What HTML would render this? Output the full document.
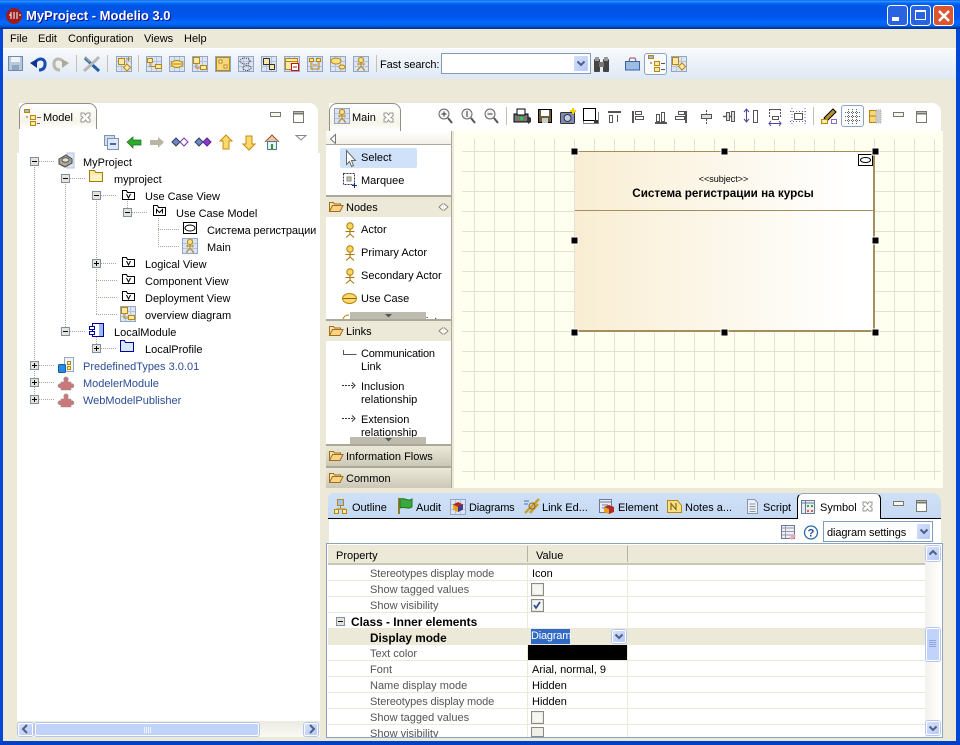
<!DOCTYPE html>
<html><head><meta charset="utf-8"><title>MyProject - Modelio 3.0</title>
<style>
html,body{margin:0;padding:0;width:960px;height:745px;overflow:hidden;background:#ece9d8}
body{position:relative;font:11px/14px "Liberation Sans","Noto Sans CJK SC",sans-serif;color:#000}
div,span{position:absolute;box-sizing:border-box}
.t{white-space:nowrap;height:14px;margin-top:1px}
.g{color:#555}.b{color:#2a4c96}
.sb{background:linear-gradient(135deg,#d4e0fd,#b7c9f8);border:1px solid #fff;border-radius:2px;box-shadow:0 0 0 1px #b4c6ea}
.hdr{left:326px;width:125px;height:20px;background:#ece9d8}
svg{position:absolute;left:0;top:0;z-index:5}
</style></head><body>

<!-- title bar -->
<div style="left:0;top:0;width:960px;height:29px;background:linear-gradient(to bottom,#0058ee 0%,#3593ff 4%,#288eff 6%,#127dff 8%,#036ffc 10%,#0262ee 14%,#0057e5 20%,#0054e3 24%,#0055eb 56%,#005bf5 66%,#026afe 76%,#0062ef 86%,#0052d6 92%,#0040ab 94%,#003092 100%)"></div>
<div class="t" style="left:26px;top:8px;height:16px;margin:0;font:bold 13px/16px 'Liberation Sans',sans-serif;color:#fff;text-shadow:1px 1px 0 #0f1089">MyProject - Modelio 3.0</div>
<!-- window frame -->
<div style="left:0;top:29px;width:3px;height:716px;background:#0047d5"></div>
<div style="left:956px;top:29px;width:4px;height:716px;background:#0047d5"></div>
<div style="left:0;top:741px;width:960px;height:4px;background:#0040c4"></div>

<!-- menu -->
<div class="t" style="left:10px;top:31px">File</div>
<div class="t" style="left:38px;top:31px">Edit</div>
<div class="t" style="left:68px;top:31px">Configuration</div>
<div class="t" style="left:144px;top:31px">Views</div>
<div class="t" style="left:184px;top:31px">Help</div>

<!-- toolbar -->
<div style="left:3px;top:48px;width:953px;height:31px;background:linear-gradient(#f7f9fc,#dfe9f4);border-top:1px solid #fff"></div>
<div class="t" style="left:380px;top:57px;letter-spacing:-.1px">Fast search:</div>
<div style="left:441px;top:53px;width:150px;height:21px;background:#fff;border:1px solid #7f9db9"></div>
<div class="sb" style="left:573px;top:55px;width:16px;height:17px;box-shadow:none"></div>
<div style="left:644px;top:53px;width:23px;height:22px;background:#f8fafd;border:1px solid #8ca5c4;border-radius:3px"></div>

<!-- Model panel -->
<div style="left:19px;top:103px;width:299px;height:50px;background:#fff;border-radius:0 9px 0 0"></div>
<div style="left:19px;top:103px;width:78px;height:26px;background:linear-gradient(#fff,#f6f4ea 70%,#fff);border:1px solid #8f8f84;border-bottom:0;border-radius:8px 8px 0 0"></div>
<div class="t" style="left:43px;top:110px">Model</div>
<div style="left:17px;top:153px;width:303px;height:568px;background:#fff"></div>
<div style="left:17px;top:721px;width:303px;height:16px;background:linear-gradient(#ecebe2,#faf9f5)"></div>
<div class="sb" style="left:18px;top:723px;width:15px;height:13px"></div>
<div class="sb" style="left:35px;top:723px;width:224px;height:13px;background:#c1d2fb"></div>
<div class="sb" style="left:304px;top:723px;width:14px;height:13px"></div>

<div class="t" style="left:83px;top:155px">MyProject</div>
<div class="t" style="left:114px;top:172px">myproject</div>
<div class="t" style="left:145px;top:189px">Use Case View</div>
<div class="t" style="left:176px;top:206px">Use Case Model</div>
<div class="t" style="left:207px;top:223px;letter-spacing:-.1px">Система регистрации</div>
<div class="t" style="left:207px;top:240px">Main</div>
<div class="t" style="left:145px;top:257px">Logical View</div>
<div class="t" style="left:145px;top:274px">Component View</div>
<div class="t" style="left:145px;top:291px">Deployment View</div>
<div class="t" style="left:145px;top:308px">overview diagram</div>
<div class="t" style="left:114px;top:325px">LocalModule</div>
<div class="t" style="left:145px;top:342px">LocalProfile</div>
<div class="t b" style="left:83px;top:359px">PredefinedTypes 3.0.01</div>
<div class="t b" style="left:83px;top:376px">ModelerModule</div>
<div class="t b" style="left:83px;top:393px">WebModelPublisher</div>

<!-- Main panel -->
<div style="left:329px;top:103px;width:612px;height:28px;background:#fff;border-radius:0 9px 0 0"></div>
<div style="left:329px;top:103px;width:72px;height:28px;background:linear-gradient(#fff,#f6f4ea 70%,#fff);border:1px solid #8f8f84;border-bottom:0;border-radius:8px 8px 0 0"></div>
<div class="t" style="left:352px;top:110px">Main</div>
<div style="left:841px;top:105px;width:23px;height:22px;background:#fbfcfe;border:1px solid #8ca5c4;border-radius:3px"></div>
<div style="left:454px;top:131px;width:489px;height:357px;background:#fffff0"></div>

<!-- palette -->
<div style="left:326px;top:131px;width:125px;height:357px;background:#fff"></div>
<div style="left:451px;top:131px;width:3px;height:357px;background:#ece9d8;border-left:1px solid #aca899"></div>
<div style="left:326px;top:131px;width:125px;height:14px;background:linear-gradient(#fff,#f2f0e6);border-bottom:1px solid #aca899"></div>
<div style="left:340px;top:148px;width:77px;height:20px;background:#cfe2fa;border-radius:2px"></div>
<div class="t" style="left:361px;top:150px">Select</div>
<div class="t" style="left:361px;top:173px">Marquee</div>
<div style="left:326px;top:195px;width:125px;height:2px;background:#aca899"></div>
<div class="hdr" style="top:197px"></div><div class="t" style="left:346px;top:200px">Nodes</div>
<div class="t" style="left:361px;top:222px">Actor</div>
<div class="t" style="left:361px;top:245px">Primary Actor</div>
<div class="t" style="left:361px;top:268px">Secondary Actor</div>
<div class="t" style="left:361px;top:291px">Use Case</div>
<div style="left:326px;top:312px;width:125px;height:7px;overflow:hidden"><div class="t" style="left:35px;top:2px">Extension Point</div></div>
<div style="left:350px;top:312px;width:76px;height:7px;background:#bdbaae"></div>
<div style="left:326px;top:319px;width:125px;height:2px;background:#aca899"></div>
<div class="hdr" style="top:321px"></div><div class="t" style="left:346px;top:324px">Links</div>
<div class="t" style="left:361px;top:346px;letter-spacing:-.2px">Communication</div>
<div class="t" style="left:361px;top:359px">Link</div>
<div class="t" style="left:361px;top:379px">Inclusion</div>
<div class="t" style="left:361px;top:392px">relationship</div>
<div class="t" style="left:361px;top:412px">Extension</div>
<div class="t" style="left:361px;top:425px">relationship</div>
<div style="left:350px;top:437px;width:76px;height:7px;background:#bdbaae"></div>
<div style="left:326px;top:444px;width:125px;height:2px;background:#aca899"></div>
<div class="hdr" style="top:446px;background:linear-gradient(#ece9d8,#cbc8b8)"></div><div class="t" style="left:346px;top:449px">Information Flows</div>
<div style="left:326px;top:466px;width:125px;height:2px;background:#aca899"></div>
<div class="hdr" style="top:468px;background:linear-gradient(#ece9d8,#cbc8b8)"></div><div class="t" style="left:346px;top:471px">Common</div>

<!-- subject -->
<div style="left:574px;top:151px;width:301px;height:181px;background:linear-gradient(90deg,#f9eed3,#fff 92%);border:1px solid #a58d5c;border-width:1px 2px 2px 1px"></div>
<div style="left:575px;top:210px;width:299px;height:1px;background:#a58d5c"></div>
<div class="t" style="left:574px;top:171px;width:299px;text-align:center;font-size:9px">&lt;&lt;subject&gt;&gt;</div>
<div class="t" style="left:574px;top:186px;width:298px;text-align:center;font-weight:bold;font-size:11.7px">Система регистрации на курсы</div>

<!-- bottom panel -->
<div style="left:328px;top:493px;width:613px;height:26px;background:linear-gradient(#cfe0f6,#c6daf4);border-bottom:1px solid #000;border-radius:6px 9px 0 0"></div>
<div style="left:797px;top:493px;width:84px;height:26px;background:#fff;border:1px solid #000;border-top:1px solid #9aa6b8;border-bottom:0;border-radius:6px 6px 0 0"></div>
<div style="left:329px;top:519px;width:612px;height:25px;background:#fff"></div>
<div class="t" style="left:352px;top:500px">Outline</div>
<div class="t" style="left:416px;top:500px">Audit</div>
<div class="t" style="left:469px;top:500px;letter-spacing:-.2px">Diagrams</div>
<div class="t" style="left:542px;top:500px">Link Ed...</div>
<div class="t" style="left:618px;top:500px">Element</div>
<div class="t" style="left:685px;top:500px">Notes a...</div>
<div class="t" style="left:763px;top:500px">Script</div>
<div class="t" style="left:820px;top:500px">Symbol</div>
<div style="left:823px;top:521px;width:110px;height:21px;background:#fff;border:1px solid #7f9db9"></div>
<div class="t" style="left:827px;top:525px;letter-spacing:-.1px">diagram settings</div>
<div class="sb" style="left:916px;top:523px;width:15px;height:17px;box-shadow:none"></div>

<!-- table -->
<div style="left:326px;top:543px;width:617px;height:195px;background:#fff;border:1px solid #8ca3c0;overflow:hidden">
<div style="left:-327px;top:-544px;width:960px;height:745px">
<div style="left:328px;top:545px;width:597px;height:18px;background:#ece9d8"></div>
<div style="left:328px;top:563px;width:597px;height:2px;background:#c9c6b6"></div>
<div style="left:527px;top:546px;width:1px;height:16px;background:#b4b2a4"></div>
<div style="left:627px;top:546px;width:1px;height:16px;background:#b4b2a4"></div>
<div class="t" style="left:336px;top:548px">Property</div>
<div class="t" style="left:536px;top:548px">Value</div>
<div style="left:328px;top:629px;width:597px;height:16px;background:#ece9d8"></div>
<div style="left:328px;top:580px;width:597px;height:1px;background:#ece9d8"></div>
<div style="left:328px;top:596px;width:597px;height:1px;background:#ece9d8"></div>
<div style="left:328px;top:612px;width:597px;height:1px;background:#ece9d8"></div>
<div style="left:328px;top:628px;width:597px;height:1px;background:#ece9d8"></div>
<div style="left:328px;top:660px;width:597px;height:1px;background:#ece9d8"></div>
<div style="left:328px;top:676px;width:597px;height:1px;background:#ece9d8"></div>
<div style="left:328px;top:692px;width:597px;height:1px;background:#ece9d8"></div>
<div style="left:328px;top:708px;width:597px;height:1px;background:#ece9d8"></div>
<div style="left:328px;top:724px;width:597px;height:1px;background:#ece9d8"></div>
<div style="left:527px;top:565px;width:1px;height:175px;background:#ece9d8"></div>
<div style="left:627px;top:565px;width:1px;height:175px;background:#ece9d8"></div>
<div style="left:528px;top:645px;width:99px;height:15px;background:#000"></div>
<div style="left:531px;top:629px;width:39px;height:15px;background:#316ac5"></div>
<div class="t" style="left:531px;top:628px;color:#fff;letter-spacing:-.2px">Diagram</div>
<div class="sb" style="left:612px;top:630px;width:14px;height:13px"></div>
<div class="t g" style="left:370px;top:566px;letter-spacing:-.1px">Stereotypes display mode</div><div class="t" style="left:532px;top:566px">Icon</div>
<div class="t g" style="left:370px;top:582px">Show tagged values</div>
<div class="t g" style="left:370px;top:598px">Show visibility</div>
<div class="t" style="left:351px;top:614px;font-weight:bold;font-size:11.9px">Class - Inner elements</div>
<div class="t" style="left:370px;top:630px;font-weight:bold;font-size:11.8px">Display mode</div>
<div class="t g" style="left:370px;top:646px">Text color</div>
<div class="t g" style="left:370px;top:662px">Font</div><div class="t" style="left:532px;top:662px">Arial, normal, 9</div>
<div class="t g" style="left:370px;top:678px">Name display mode</div><div class="t" style="left:532px;top:678px">Hidden</div>
<div class="t g" style="left:370px;top:694px;letter-spacing:-.1px">Stereotypes display mode</div><div class="t" style="left:532px;top:694px">Hidden</div>
<div class="t g" style="left:370px;top:710px">Show tagged values</div>
<div class="t g" style="left:370px;top:726px">Show visibility</div>
<div style="left:925px;top:545px;width:16px;height:192px;background:linear-gradient(90deg,#f3f1ec,#fff)"></div>
<div class="sb" style="left:926px;top:546px;width:14px;height:15px"></div>
<div class="sb" style="left:926px;top:628px;width:14px;height:33px;background:#c1d2fb"></div>
<div class="sb" style="left:926px;top:721px;width:14px;height:14px"></div>
</div></div>

<svg width="960" height="745" viewBox="0 0 960 745" fill="none">
<defs>
<g id="dg"><rect x=".5" y=".5" width="15" height="15" fill="#dce4f2" stroke="#93a6c6"/><path d="M5.500 1v14M10.500 1v14M1 5.500h14M1 10.500h14" stroke="#b4c2dc"/></g>
<g id="act"><circle cx="7" cy="4" r="3.200" fill="#f7d75e" stroke="#b07c08"/><path d="M7 7v5M2.500 9.500h9M7 12l-4 3.500M7 12l4 3.500" stroke="#a87808" stroke-width="1.100"/></g>
<g id="pkg"><path d="M.5 9.500v-9h4l1 2h7v7z" fill="#fff" stroke="#000"/><path d="M4.500 4l2 4 2-4" stroke="#000"/></g>
<g id="min"><rect x=".5" y=".5" width="10" height="4" fill="#f7f6f1" stroke="#77776a"/></g>
<g id="max"><rect x=".5" y=".5" width="10" height="11" fill="#fff" stroke="#77776a"/><path d="M1 2.500h9" stroke="#77776a" stroke-width="2"/></g>
<g id="x"><path d="M1 1h3l1.500 2L7 1h3v3L8 5.500 10 7v3H7L5.500 8 4 10H1V7l2-1.500L1 4z" fill="#fff" stroke="#96968c"/></g>
<g id="ofold"><path d="M.5 11.500v-9h4l1 1.500h6v2" fill="#fbe3a1" stroke="#a56b1b"/><path d="M.5 11.500l3-6h10.500l-3 6z" fill="#fad486" stroke="#a56b1b"/></g>
<g id="dbl"><path d="M5 .5l-4 3.500 4 3.500M6 .5l4 3.500-4 3.500" stroke="#8b8b80" fill="#fff"/></g>
<g id="pm"><rect x=".5" y=".5" width="8" height="8" fill="#e6e4d6" stroke="#7e8ea6"/><path d="M2 4.500h5" stroke="#000"/></g>
<g id="pp"><rect x=".5" y=".5" width="8" height="8" fill="#e6e4d6" stroke="#7e8ea6"/><path d="M2 4.500h5M4.500 2v5" stroke="#000"/></g>
<g id="puz"><path d="M3 7h3V5a2.200 2.200 0 1 1 4 0v2h3v2a2 2 0 1 1 0 3.500V15H3v-2.500a2 2 0 1 1 0-3.500z" fill="#c9787c" stroke="#a09088" stroke-width=".6"/></g>
<g id="cb"><rect x=".5" y=".5" width="12" height="12" fill="#e9e8e0" stroke="#8a8a86"/><rect x="2" y="2" width="9" height="9" fill="#f6f6f2"/></g>
<g id="dn"><path d="M-3.500-1.500l3.500 3.500 3.500-3.500" stroke="#4d6185" stroke-width="2"/></g>
<g id="up"><path d="M-3.500 1.500l3.500-3.500 3.500 3.500" stroke="#4d6185" stroke-width="2"/></g>
<g id="h"><rect x="-3.500" y="-3.500" width="7" height="7" fill="#000" stroke="#fff"/></g>
<g id="arrow"><path d="M0 4.500h13" stroke="#333" stroke-dasharray="2 1"/><path d="M10 1.500l3 3-3 3" stroke="#333"/></g>
<g id="xo"><rect x=".5" y=".5" width="5" height="4" fill="#fbe9a8" stroke="#b8860b"/><rect x="8.500" y="6.500" width="6" height="4" fill="#fbe9a8" stroke="#b8860b"/><path d="M3 5v3.500h5.500" stroke="#b8860b"/></g>
</defs>

<!-- title icon & window buttons -->
<circle cx="14" cy="16" r="8" fill="#9b1c1c"/><path d="M9 15h2M11 12v7M14 12v7M17 12v7M19 15h2" stroke="#fff" stroke-width="1"/>
<rect x="887.500" y="5.500" width="20" height="20" rx="3" fill="#2a63e0" stroke="#fff"/><rect x="892" y="17" width="7" height="4" fill="#fff"/>
<rect x="910.500" y="5.500" width="20" height="20" rx="3" fill="#2a63e0" stroke="#fff"/><path d="M915.500 11.500h10v8h-10z" stroke="#fff"/><path d="M915 11h11" stroke="#fff" stroke-width="2"/>
<rect x="933.500" y="5.500" width="20" height="20" rx="3" fill="#dc5531" stroke="#fff"/><path d="M939 11l10 10M949 11l-10 10" stroke="#fff" stroke-width="2.400"/>

<!-- main toolbar icons -->
<g transform="translate(8 56)"><rect x=".5" y=".5" width="14" height="14" fill="#b7c8dd" stroke="#6d88a8"/><rect x="3" y="1" width="9" height="5" fill="#eef3f8"/><rect x="4" y="9" width="7" height="5" fill="#8ea6c2"/></g>
<path d="M35 63C38 57 46 58 45 65 44.500 69 42 70 39 70" stroke="#1b4bb0" stroke-width="3"/><path d="M30 63l7-4v9z" fill="#12358c"/>
<path d="M64 63C61 57 53 58 54 65 54.500 69 57 70 60 70" stroke="#bdb9a9" stroke-width="3"/><path d="M69 63l-7-4v9z" fill="#aeaa98"/>
<path d="M76.500 55v17M107.500 55v17M138.500 55v17M376.500 55v17" stroke="#c5c1ad"/>
<path d="M85 58l14 13" stroke="#1c5ea8" stroke-width="3"/><path d="M99 57l-4 4-11 10" stroke="#b8b8b8" stroke-width="3"/><path d="M85 57l5 5" stroke="#999" stroke-width="2"/>
<g transform="translate(116 56)"><use href="#dg"/><rect x="2.500" y="2.500" width="6" height="6" fill="#fbe9a8" stroke="#b8860b"/><path d="M11 8l3.500 3.500-3.500 3.500-3.500-3.500z" fill="#fbe9a8" stroke="#b8860b"/><path d="M12.500 1v4M10.500 3h4" stroke="#b8860b"/></g>
<g transform="translate(146 56)"><use href="#dg"/><use href="#xo" transform="translate(1 2)"/></g>
<g transform="translate(169 56)"><use href="#dg"/><ellipse cx="8" cy="8" rx="6" ry="3.500" fill="#fbe08a" stroke="#b8860b"/><path d="M3 8h10" stroke="#b8860b"/></g>
<g transform="translate(192 56)"><use href="#dg"/><rect x="1.500" y="1.500" width="6" height="6" fill="#fbe9a8" stroke="#b8860b"/><rect x="8.500" y="9.500" width="6" height="4" fill="#fbe9a8" stroke="#b8860b"/><path d="M4 8v4h4" stroke="#b8860b"/></g>
<g transform="translate(215 56)"><use href="#dg"/><rect x="1.500" y="1.500" width="13" height="13" fill="#f7d77c" stroke="#b8860b"/><rect x="4" y="4" width="3" height="3" fill="#fff" stroke="#b8860b"/><rect x="9" y="9" width="3" height="3" fill="#fff" stroke="#b8860b"/></g>
<g transform="translate(238 56)"><use href="#dg"/><ellipse cx="7" cy="5" rx="5" ry="3" stroke="#333" stroke-dasharray="1 1"/><ellipse cx="9" cy="12" rx="4" ry="2.500" stroke="#333" stroke-dasharray="1 1"/></g>
<g transform="translate(261 56)"><use href="#dg"/><rect x="2.500" y="2.500" width="6" height="6" fill="#fbe9a8" stroke="#333"/><rect x="8.500" y="8.500" width="5" height="5" fill="#fbe9a8" stroke="#333"/></g>
<g transform="translate(284 56)"><use href="#dg"/><rect x="1.500" y="2.500" width="12" height="11" fill="#fbe9a8" stroke="#b8860b"/><path d="M2 5.500h11" stroke="#b8860b"/><rect x="7.500" y="7.500" width="7" height="7" fill="#fff" stroke="#c11"/><path d="M9 11h4" stroke="#c11"/></g>
<g transform="translate(307 56)"><use href="#dg"/><rect x="2.500" y="2.500" width="4" height="3" fill="#fbe9a8" stroke="#b8860b"/><rect x="9.500" y="2.500" width="4" height="3" fill="#fbe9a8" stroke="#b8860b"/><path d="M4 6v7h8V6M6 9h4" stroke="#b8860b"/></g>
<g transform="translate(330 56)"><use href="#dg"/><ellipse cx="6" cy="5" rx="5" ry="3" fill="#fbe08a" stroke="#b8860b"/><ellipse cx="12" cy="11" rx="3" ry="2" fill="#fbe08a" stroke="#b8860b"/></g>
<g transform="translate(353 56)"><use href="#dg"/><circle cx="8" cy="4" r="2.500" fill="#fbe08a" stroke="#b8860b"/><path d="M8 6.500v4M4 8h8M8 10.500l-4 4M8 10.500l4 4" stroke="#b8860b"/></g>
<use href="#dn" transform="translate(581 63)"/>
<g transform="translate(593 56)"><rect x="1" y="3" width="6" height="13" rx="1" fill="#444"/><rect x="10" y="3" width="6" height="13" rx="1" fill="#444"/><rect x="6" y="6" width="5" height="5" fill="#777"/><rect x="2" y="1" width="4" height="4" fill="#999"/><rect x="11" y="1" width="4" height="4" fill="#999"/></g>
<path d="M625.500 61.500h14v8.500h-14z" fill="#9bbde4" stroke="#3a63a8"/><path d="M629 61l1-3h5l1 3" stroke="#9c4a4a"/>
<g transform="translate(648 55)"><rect x=".5" y=".5" width="5" height="3" fill="#9fb8de" stroke="#b8860b"/><rect x="6.500" y="6.500" width="5" height="4" fill="#fbe9a8" stroke="#b8860b"/><rect x="6.500" y="12.500" width="5" height="4" fill="#fbe9a8" stroke="#b8860b"/><path d="M13 8.500h4M13 14.500h4M2 8h2" stroke="#555"/></g>
<g transform="translate(671 56)"><use href="#dg"/><rect x="1.500" y="1.500" width="6" height="7" fill="#fbe9a8" stroke="#b8860b"/><path d="M11 7l3.500 3.500-3.500 3.500-3.500-3.500z" fill="#fbe9a8" stroke="#b8860b"/></g>

<!-- Model tab icons -->
<g transform="translate(24 109)"><rect x=".5" y=".5" width="5" height="3" fill="#9fb8de" stroke="#b8860b"/><rect x="6.500" y="6.500" width="5" height="4" fill="#fbe9a8" stroke="#b8860b"/><rect x="6.500" y="12.500" width="5" height="4" fill="#fbe9a8" stroke="#b8860b"/><path d="M13 8.500h4M13 14.500h3M2 8h2" stroke="#666"/></g>
<use href="#x" transform="translate(80 112)"/>
<use href="#min" transform="translate(270 112)"/><use href="#max" transform="translate(293 111)"/>
<rect x="104.500" y="135.500" width="10" height="10" fill="#cfdcec" stroke="#7b95b8"/><rect x="107.500" y="138.500" width="11" height="11" fill="#dfe8f4" stroke="#7b95b8"/><path d="M110 144h6" stroke="#173e8a" stroke-width="1.500"/>
<path d="M127 142l6-5v3h8v5h-8v3z" fill="#2eaa2e" stroke="#157015" stroke-width=".7"/>
<path d="M164 142l-6-5v3h-8v5h8v3z" fill="#b8b5a5"/>
<g><path d="M172 142l4-4 4 4-4 4z" fill="#6b87c8" stroke="#345"/><path d="M180 142l4-4 4 4-4 4z" fill="#fff" stroke="#7a33b0"/><path d="M195 142l4-4 4 4-4 4z" fill="#6b87c8" stroke="#345"/><path d="M203 142l4-4 4 4-4 4z" fill="#8a3cc8" stroke="#5a1f90"/></g>
<path d="M226 135l6 6h-3v8h-6v-8h-3z" fill="#fbd96b" stroke="#c98a10"/>
<path d="M249 150l6-6h-3v-8h-6v8h-3z" fill="#fbd96b" stroke="#c98a10"/>
<path d="M265 142l7-7 7 7" stroke="#a05030" fill="#e8c8a8"/><rect x="267.500" y="141.500" width="9" height="8" fill="#e8f0f8" stroke="#4a7a9a"/><rect x="271" y="144" width="2" height="5" fill="#2a9a2a"/>
<path d="M296 135.500h10l-5 4.500z" fill="#fff" stroke="#888"/>

<!-- tree lines -->
<path d="M34.500 167v230M65.500 184v144M96.500 201v113M127.500 201v12M158.500 218v29M96.500 337v8" stroke="#a8a89a" stroke-dasharray="1 1"/>
<path d="M39 161.500h16M70 178.500h16M101 195.500h16M132 212.500h16M158 229.500h22M158 246.500h22M101 263.500h16M96 280.500h21M96 297.500h21M96 314.500h21M70 331.500h16M101 348.500h16M39 365.500h16M39 382.500h16M39 399.500h16" stroke="#a8a89a" stroke-dasharray="1 1"/>
<use href="#pm" transform="translate(30 157)"/><use href="#pm" transform="translate(61 174)"/><use href="#pm" transform="translate(92 191)"/><use href="#pm" transform="translate(123 208)"/><use href="#pp" transform="translate(92 259)"/><use href="#pm" transform="translate(61 327)"/><use href="#pp" transform="translate(92 344)"/><use href="#pp" transform="translate(30 361)"/><use href="#pp" transform="translate(30 378)"/><use href="#pp" transform="translate(30 395)"/>
<!-- tree icons -->
<g transform="translate(58 153)"><rect x="9" y="0" width="7" height="15" fill="#dce4f2" stroke="#b4c2dc"/><path d="M1 6l7-4 6 4v4l-7 4-6-3z" fill="#aaa596" stroke="#444"/><ellipse cx="7.500" cy="7" rx="3.500" ry="2.200" fill="#e8e4d8" stroke="#555"/></g>
<g transform="translate(89 170)"><path d="M.5 11.500v-11h5l1.500 2h6.500v9z" fill="#fde9a8" stroke="#a57a1b"/><path d="M2 5h10v5.500H2z" fill="#fff3c8"/></g>
<use href="#pkg" transform="translate(122 190)"/>
<g transform="translate(153 205)"><path d="M.5 10.500v-10h4l1 2h7v8z" fill="#fff" stroke="#000"/><path d="M3.500 8.500v-4l3 3 3-3v4" stroke="#000"/></g>
<rect x="183.500" y="222.500" width="13" height="11" fill="#fff" stroke="#000"/><ellipse cx="190" cy="228" rx="5" ry="3" stroke="#000"/>
<g transform="translate(182 238)"><use href="#dg"/><circle cx="8" cy="4" r="2.500" fill="#fbe08a" stroke="#b8860b"/><path d="M8 6.500v4M4 8h8M8 10.500l-4 4M8 10.500l4 4" stroke="#b8860b"/></g>
<use href="#pkg" transform="translate(122 257)"/><use href="#pkg" transform="translate(122 274)"/><use href="#pkg" transform="translate(122 291)"/>
<g transform="translate(120 306)"><use href="#dg"/><rect x="1.500" y="1.500" width="6" height="6" fill="#fbe9a8" stroke="#b8860b"/><rect x="8.500" y="9.500" width="6" height="4" fill="#fbe9a8" stroke="#b8860b"/><path d="M4 8v4h4" stroke="#b8860b"/></g>
<g transform="translate(89 323)"><rect x="3.500" y=".5" width="11" height="13" fill="#fff" stroke="#00009a"/><rect x="10" y="1" width="4" height="12" fill="#9db8f0"/><rect x=".5" y="3.500" width="5" height="3" fill="#fff" stroke="#00009a"/><rect x=".5" y="8.500" width="5" height="3" fill="#fff" stroke="#00009a"/></g>
<path d="M120.500 351.500v-11h4l1 2h8v9z" fill="#d6e8fb" stroke="#00009a"/>
<g transform="translate(58 357)"><rect x="6.500" y=".5" width="9" height="14" fill="#eef2fa" stroke="#99a8c4"/><rect x="9.500" y="4.500" width="3" height="3" fill="#fbe9a8" stroke="#b8860b"/><rect x="9.500" y="9.500" width="3" height="3" fill="#fbe9a8" stroke="#b8860b"/><rect x=".5" y="7.500" width="7" height="8" rx="1" fill="#2b8ae0" stroke="#0a5fa8"/></g>
<use href="#puz" transform="translate(58 375)"/><use href="#puz" transform="translate(58 392)"/>

<!-- Main tab and diagram toolbar -->
<g transform="translate(334 108)"><use href="#dg"/><circle cx="8" cy="4" r="2.500" fill="#fbe08a" stroke="#b8860b"/><path d="M8 6.500v4M4 8h8M8 10.500l-4 4M8 10.500l4 4" stroke="#b8860b"/></g>
<use href="#x" transform="translate(383 112)"/>
<g stroke="#666" fill="#f2f4f8"><circle cx="444" cy="114" r="5"/><circle cx="467" cy="114" r="5"/><circle cx="490" cy="114" r="5"/></g>
<path d="M448 118l4 5M471 118l4 5M494 118l4 5" stroke="#555" stroke-width="2"/><path d="M441.500 114h5M444 111.500v5M467 111v6M487.500 114h5" stroke="#333"/>
<path d="M506.500 107v18M813.500 107v18" stroke="#c5c1ad"/>
<g transform="translate(514 108)"><rect x="0" y="6" width="14" height="8" fill="#777" stroke="#000"/><rect x="3" y="1" width="8" height="6" fill="#fff" stroke="#000"/><rect x="6" y="9" width="3" height="3" fill="#2ecc40"/><path d="M14 8l3 2v4l-3 2" fill="#333"/></g>
<g transform="translate(538 109)"><rect x=".5" y=".5" width="13" height="13" fill="#6e5d3a" stroke="#000"/><rect x="3" y="1" width="8" height="6" fill="#fff"/><rect x="4" y="9" width="6" height="5" fill="#ccc"/></g>
<g transform="translate(560 108)"><rect x=".5" y="4.500" width="14" height="11" rx="1" fill="#7e8bb5" stroke="#333"/><circle cx="7.500" cy="10" r="3.500" fill="#c6cde0" stroke="#334"/><path d="M13 0v6M10 3h6" stroke="#f4d000" stroke-width="2"/></g>
<g transform="translate(583 108)"><path d="M.5.500h12v12H.5z" fill="#fff" stroke="#000"/><path d="M.5 12.500v3h15v-12" stroke="#000" stroke-dasharray="1 1"/><rect x="11" y="12" width="4" height="3" fill="#333"/></g>
<g stroke="#555" fill="none">
<path d="M608 112h13" stroke-width="2"/><path d="M609.500 115.500h3v7h-3zM617.500 115v7"/>
<path d="M633 111v12" stroke-width="2"/><path d="M635.500 111.500h6v3h-6zM635.500 116.500h8v3h-8z"/>
<path d="M655 123h12" stroke-width="2"/><path d="M656.500 114.500h3v7h-3zM661.500 112.500h3v9h-3z"/>
<path d="M686 111v12" stroke-width="2"/><path d="M678.500 111.500h6v3h-6zM675.500 116.500h9v3h-9z"/>
<path d="M706.500 110v14" stroke-dasharray="2 1"/><path d="M701.500 114.500h10v4h-10z" fill="#ddd"/>
<path d="M723 116.500h11" stroke-width="1.500"/><path d="M726.500 112.500h3v8h-3zM731.500 111.500h3v10h-3z" fill="#ddd"/>
<path d="M753.500 110.500h4v12h-4z"/>
<path d="M769 109.500h11" /><path d="M772.500 116.500h6v3h-6z"/><path d="M769.500 109v9M780.500 109v9" stroke-dasharray="2 1"/>
<path d="M794.500 113.500h8v6h-8z"/><path d="M790 111.500h16M790 121.500h16M792 108v16M805 108v16" stroke="#6a5cb0" stroke-dasharray="1 2"/>
</g>
<path d="M746.500 109v13M744 112l2.500-3 2.500 3M744 119l2.500 3 2.500-3" stroke="#4a44a0"/><path d="M769 123.500h12M771 121l-2 2.500 2 2.500M779 121l2 2.500-2 2.500" stroke="#4a44a0"/>
<g transform="translate(821 108)"><path d="M3 10l9-9 3 3-9 9z" fill="#b8922a" stroke="#000"/><rect x=".5" y="11.500" width="6" height="4" fill="#fbe9a8" stroke="#b8860b"/><rect x="10.500" y="11.500" width="5" height="4" fill="#fff" stroke="#8a6cc8"/></g>
<path d="M845 112.500h15M845 116.500h15M845 120.500h15M848.500 109v15M852.500 109v15M856.500 109v15" stroke="#666" stroke-dasharray="1 1"/>
<rect x="869.500" y="110.500" width="7" height="12" fill="#f7d77c" stroke="#b8860b"/><path d="M870 116h6" stroke="#b8860b"/><rect x="876" y="110" width="5" height="13" fill="#ccc" stroke="#aaa" stroke-dasharray="1 1"/>
<use href="#min" transform="translate(893 112)"/><use href="#max" transform="translate(916 111)"/>

<!-- canvas grid -->
<path d="M474.500 139V480M494.500 139V480M514.500 139V480M534.500 139V480M554.500 139V480M894.500 139V480M914.500 139V480M934.500 139V480M574.500 139V480M594.500 332V480M614.500 332V480M634.500 332V480M654.500 332V480M674.500 332V480M694.500 332V480M714.500 332V480M734.500 332V480M754.500 332V480M774.500 332V480M794.500 332V480M814.500 332V480M834.500 332V480M854.500 332V480M874.500 332V480M594.500 139V151M614.500 139V151M634.500 139V151M654.500 139V151M674.500 139V151M694.500 139V151M714.500 139V151M734.500 139V151M754.500 139V151M774.500 139V151M794.500 139V151M814.500 139V151M834.500 139V151M854.500 139V151M874.500 139V151" stroke="#e2e2d4"/>
<path d="M462 151.500H574M875 151.500H941M462 171.500H574M875 171.500H941M462 191.500H574M875 191.500H941M462 211.500H574M875 211.500H941M462 231.500H574M875 231.500H941M462 251.500H574M875 251.500H941M462 271.500H574M875 271.500H941M462 291.500H574M875 291.500H941M462 311.500H574M875 311.500H941M462 331.500H574M875 331.500H941M462 351.500H941M462 371.500H941M462 391.500H941M462 411.500H941M462 431.500H941M462 451.500H941M462 471.500H941" stroke="#e2e2d4"/>
<rect x="858.500" y="154.500" width="14" height="11" fill="#fff" stroke="#000"/><ellipse cx="865.500" cy="160" rx="5" ry="2.500" stroke="#000"/>
<use href="#h" transform="translate(574.500 151.500)"/><use href="#h" transform="translate(724.500 151.500)"/><use href="#h" transform="translate(875.500 151.500)"/><use href="#h" transform="translate(574.500 240.500)"/><use href="#h" transform="translate(875.500 240.500)"/><use href="#h" transform="translate(574.500 332.500)"/><use href="#h" transform="translate(724.500 332.500)"/><use href="#h" transform="translate(875.500 332.500)"/>

<!-- palette icons -->
<path d="M335.500 134.500v9l-5-4.500z" fill="#fff" stroke="#777"/>
<path d="M346.500 150.500v14l3-3 2 5 2-1-2-5h4z" fill="#fff" stroke="#666"/>
<rect x="343.500" y="173.500" width="11" height="11" stroke="#335" stroke-dasharray="2 1"/><rect x="347" y="177" width="4" height="4" fill="#c9c5a8" stroke="#888"/><path d="M352 185.500h5M354.500 183v5" stroke="#0a2a7a"/>
<use href="#ofold" transform="translate(329 200)"/><use href="#dbl" transform="translate(438 203)"/>
<use href="#act" transform="translate(343 222)"/><use href="#act" transform="translate(343 245)"/><use href="#act" transform="translate(343 268)"/>
<ellipse cx="349.500" cy="298.500" rx="7" ry="5" fill="#fbd96b" stroke="#b8860b"/><path d="M343 298.500h13" stroke="#8a6a10"/>
<path d="M343 319c1-3 3-4 6-4" stroke="#b8860b"/>
<use href="#ofold" transform="translate(329 324)"/><use href="#dbl" transform="translate(438 327)"/>
<path d="M343.500 350v4.500h13" stroke="#555"/>
<use href="#arrow" transform="translate(342 381)"/><use href="#arrow" transform="translate(342 414)"/>
<path d="M385 314h7l-3.500 3.500z" fill="#555"/><path d="M385 438h7l-3.500 3.500z" fill="#555"/>
<use href="#ofold" transform="translate(329 449)"/><use href="#ofold" transform="translate(329 471)"/>

<!-- bottom tab icons -->
<g transform="translate(334 499)"><rect x="3.500" y=".5" width="6" height="6" fill="#9fc4f0" stroke="#b8860b"/><path d="M6.500 7v3M2.500 10h9" stroke="#b8860b"/><rect x=".5" y="10.500" width="4" height="4" fill="#fbe9a8" stroke="#b8860b"/><rect x="8.500" y="10.500" width="4" height="4" fill="#fbe9a8" stroke="#b8860b"/></g>
<path d="M398 498h2v16h-2z" fill="#9a7a30"/><path d="M400 499c4-2 8 3 12 0v8c-4 3-8-1-12 1z" fill="#3aa83a" stroke="#1a7a1a"/>
<g transform="translate(450 499)"><use href="#dg"/><path d="M8 3l5 2.500v5L8 13l-5-2.500v-5z" fill="#b02a2a"/><path d="M8 8l5-2.500v5L8 13z" fill="#3a3a90"/><path d="M8 8v5l-5-2.500v-5z" fill="#e8a020"/></g>
<path d="M525 513l14-14M530 513l8-9" stroke="#c8a030" stroke-width="2.500"/><path d="M524 501h5M524 504h4" stroke="#4a6fb0"/><circle cx="532" cy="506" r="3" stroke="#8a6a10"/>
<g transform="translate(599 499)"><rect x=".5" y=".5" width="12" height="13" fill="#e8ecf5" stroke="#6a7a94"/><path d="M1 3h11M3 6h6M3 9h6" stroke="#6a7a94"/><path d="M10 6l5 2v5l-5 2-5-2V8z" fill="#b02a2a"/><path d="M10 10v5l-5-2V8z" fill="#e8a020"/></g>
<g transform="translate(667 500)"><path d="M.5.500h10l4 5v7H.5z" fill="#f7e08a" stroke="#b8860b"/><path d="M4 10V3.500l5 6V3" stroke="#8a6a10" stroke-width="1.200"/></g>
<g transform="translate(747 499)"><path d="M.5.500h7l3 3v11H.5z" fill="#eef1f7" stroke="#8a94a8"/><path d="M2.500 5h6M2.500 7.500h6M2.500 10h6M2.500 12.500h6" stroke="#8a94a8"/></g>
<g transform="translate(801 500)"><rect x=".5" y=".5" width="13" height="13" fill="#e8ecf5" stroke="#6a7a94"/><path d="M1 3h12M4.500 1v12" stroke="#6a7a94"/><rect x="6" y="5" width="2" height="2" fill="#3aa83a"/><rect x="10" y="5" width="2" height="2" fill="#3aa83a"/><rect x="6" y="10" width="2" height="2" fill="#e05a5a"/><rect x="10" y="10" width="2" height="2" fill="#e05a5a"/></g>
<use href="#x" transform="translate(862 501)"/>
<use href="#min" transform="translate(893 501)"/><use href="#max" transform="translate(916 500)"/>
<g transform="translate(781 525)"><rect x=".5" y=".5" width="13" height="13" fill="#eef0f5" stroke="#6a7a94"/><path d="M1 3h12M4.500 1v12M1 6.500h12M1 10h12" stroke="#99a"/><path d="M8 13l5-4 2 2-4 4z" fill="#f0a8b0"/></g>
<circle cx="811" cy="532.500" r="6.500" fill="#fff" stroke="#2a6aa8" stroke-width="1.300"/><text x="811" y="536.500" text-anchor="middle" font-family="Liberation Sans" font-weight="bold" font-size="11" fill="#1a4a8a">?</text>
<use href="#dn" transform="translate(924 531)"/>
<use href="#cb" transform="translate(531 583)"/>
<use href="#cb" transform="translate(531 599)"/><path d="M534 605l2 3 4-6" stroke="#2a4a8a" stroke-width="1.700"/>
<use href="#cb" transform="translate(531 711)"/>
<rect x="531.500" y="727.500" width="12" height="9" fill="#f0efe8" stroke="#8a8a86"/>
<use href="#pm" transform="translate(336 617)"/>
<use href="#dn" transform="translate(619 636)"/>
<use href="#up" transform="translate(933 553)"/><use href="#dn" transform="translate(933 728)"/>
<path d="M929 640.500h7M929 642.500h7M929 644.500h7M929 646.500h7" stroke="#8ea6dc"/>
<path d="M27 725l-4 4 4 4" stroke="#4d6185" stroke-width="2"/><path d="M310 725l4 4-4 4" stroke="#4d6185" stroke-width="2"/>
<path d="M144.500 727v6M146.500 727v6M148.500 727v6M150.500 727v6" stroke="#eef3ff"/>
</svg>
</body></html>
